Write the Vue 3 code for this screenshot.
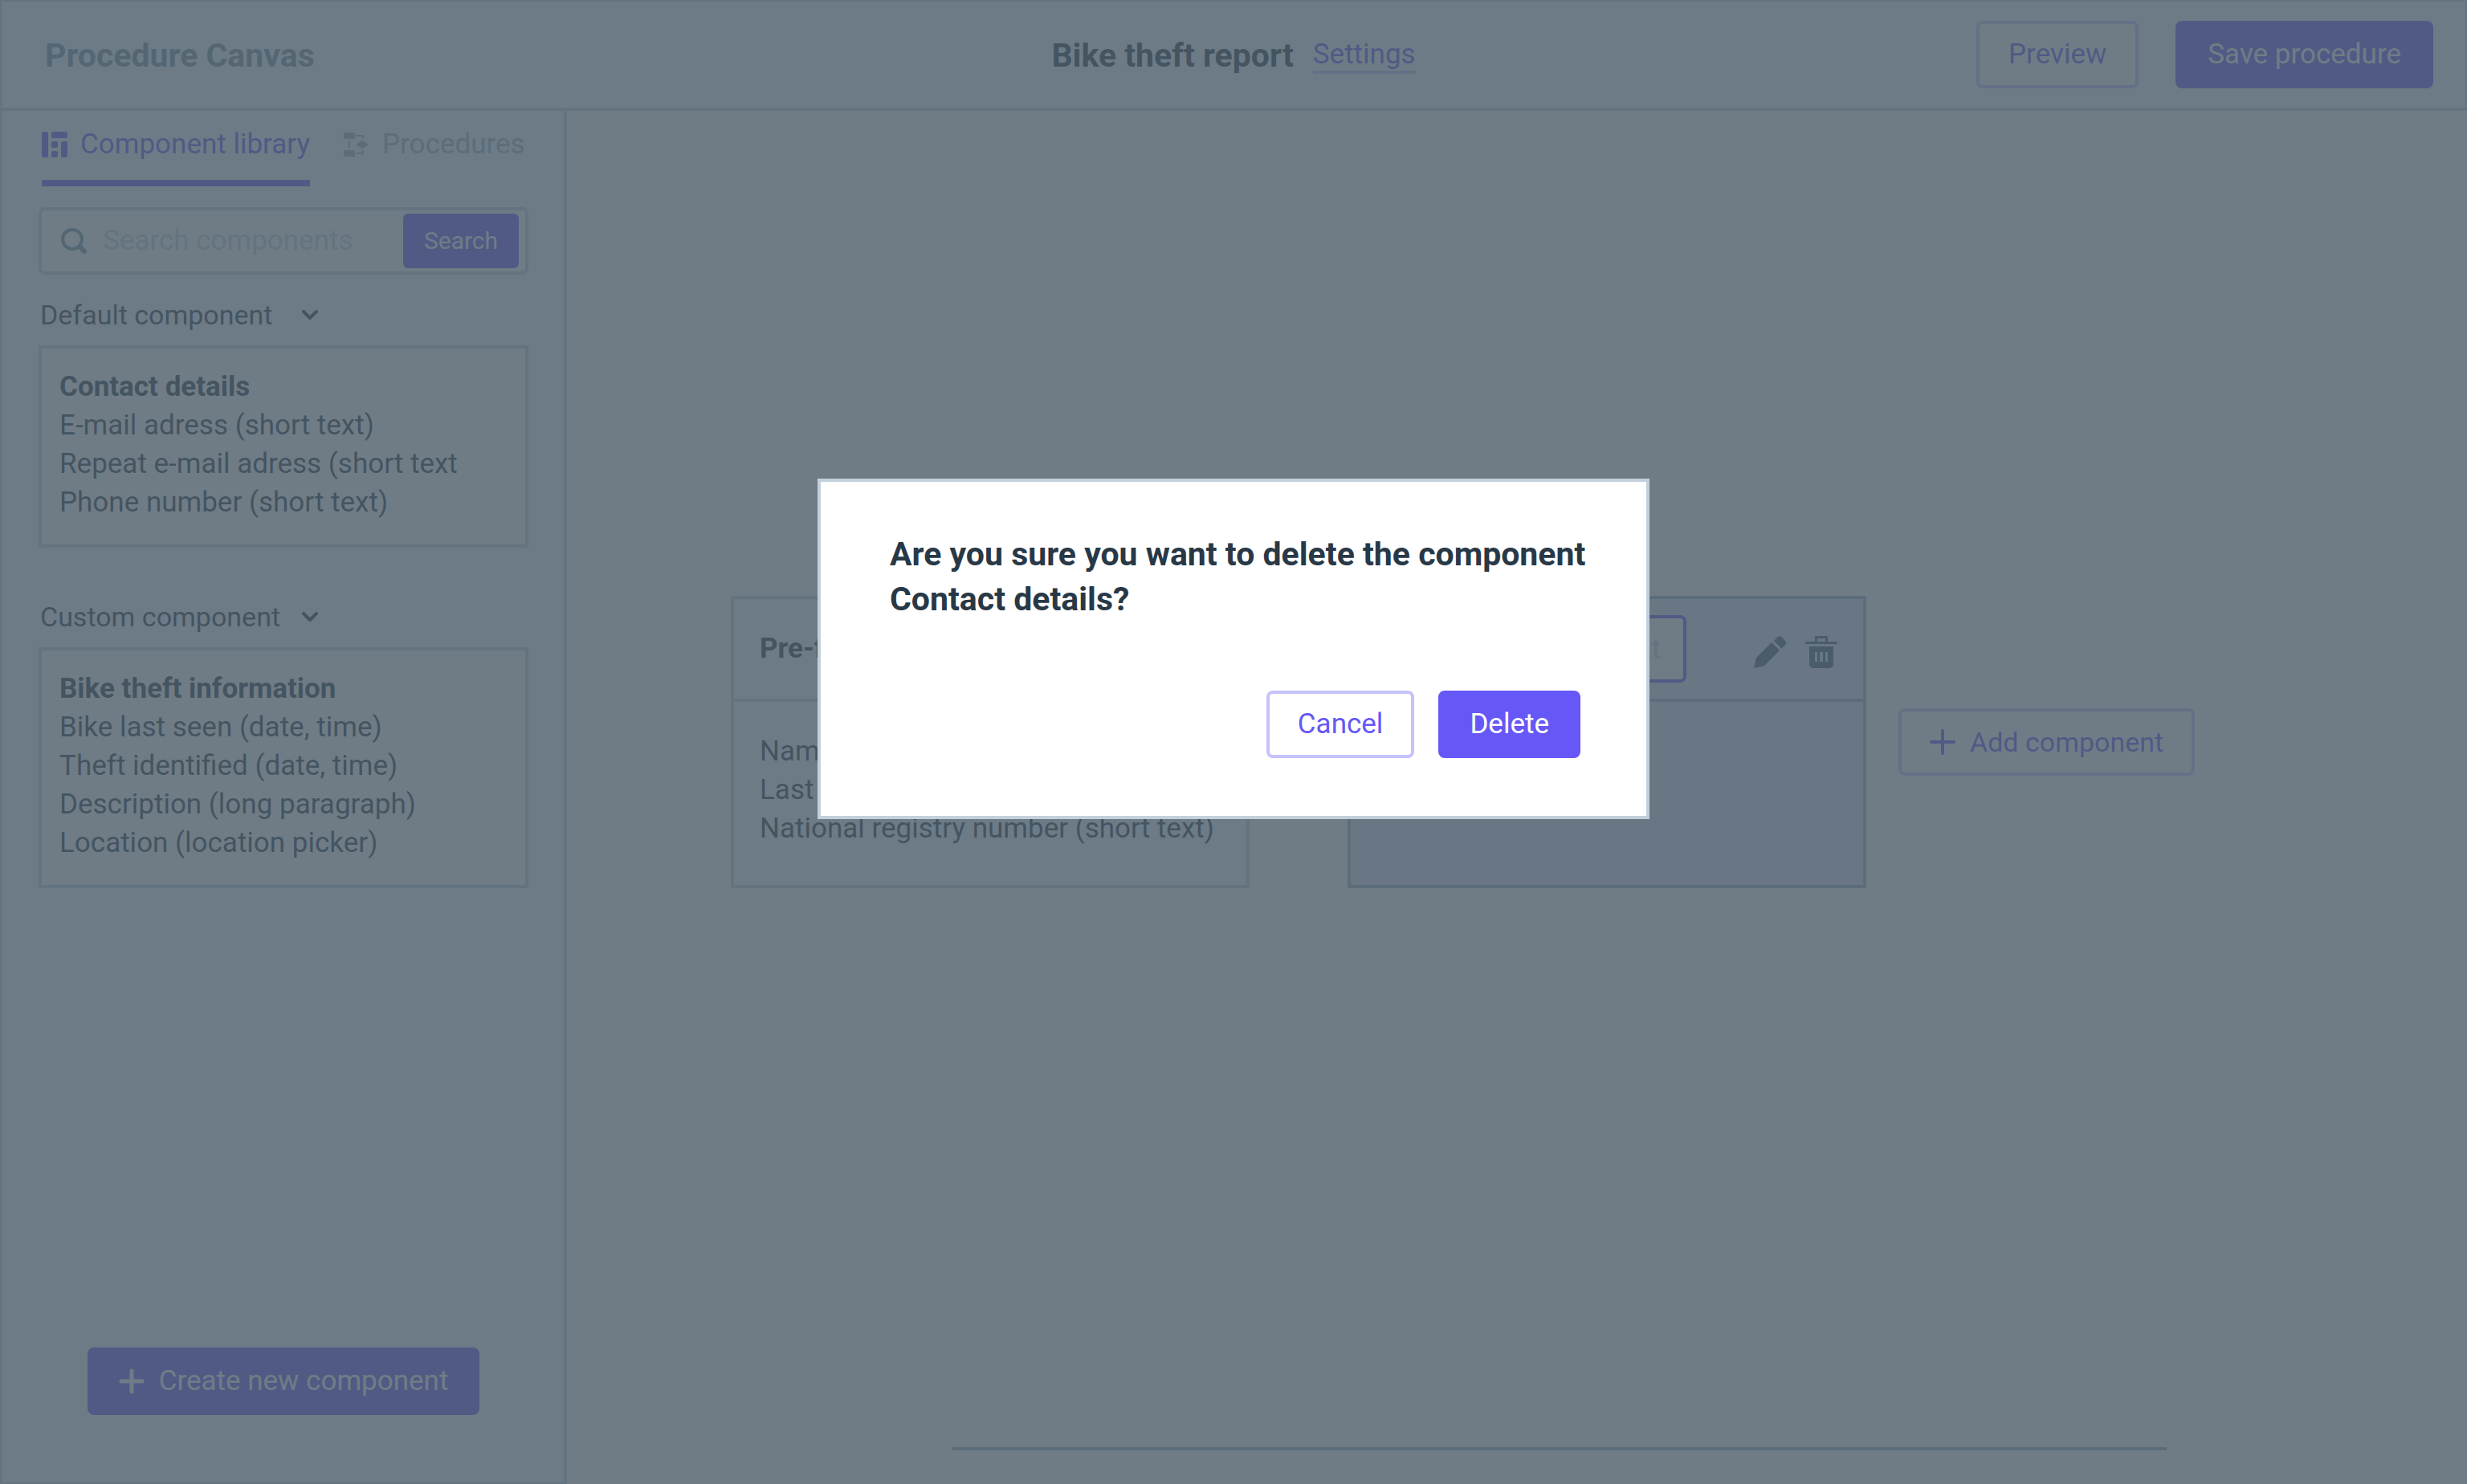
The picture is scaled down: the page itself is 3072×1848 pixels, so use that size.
<script setup>
import { ref } from 'vue'

const search = ref('')
const componentName = ref('')

const libraries = [
  {
    label: 'Default component',
    title: 'Contact details',
    fields: [
      'E-mail adress (short text)',
      'Repeat e-mail adress (short text',
      'Phone number (short text)',
    ],
  },
  {
    label: 'Custom component',
    title: 'Bike theft information',
    fields: [
      'Bike last seen (date, time)',
      'Theft identified (date, time)',
      'Description (long paragraph)',
      'Location (location picker)',
    ],
  },
]

const prefilled = [
  'Name (short text)',
  'Last name (short text)',
  'National registry number (short text)',
]
</script>

<template>
  <div class="app">
    <header class="topbar">
      <div class="brand">Procedure Canvas</div>
      <div class="document">
        <h1>Bike theft report</h1>
        <a href="#settings">Settings</a>
      </div>
      <div class="topbar-actions">
        <button type="button" class="btn outline">Preview</button>
        <button type="button" class="btn solid">Save procedure</button>
      </div>
    </header>

    <div class="workspace">
      <aside class="sidebar">
        <nav class="tabs">
          <a href="#library" class="tab active">
            <svg width="32" height="32" viewBox="0 0 32 32" fill="currentColor" aria-hidden="true">
              <rect x="0" y="0" width="8" height="32" rx="2" />
              <rect x="12" y="0" width="20" height="8" rx="2" />
              <rect x="12" y="12" width="8" height="8" rx="2" />
              <rect x="12" y="24" width="8" height="8" rx="2" />
              <rect x="24" y="12" width="8" height="20" rx="2" />
            </svg>
            <span>Component library</span>
          </a>
          <a href="#procedures" class="tab">
            <svg width="32" height="32" viewBox="0 0 32 32" fill="currentColor" aria-hidden="true">
              <rect x="0" y="1" width="14" height="8" rx="1" />
              <rect x="0" y="23" width="14" height="8" rx="1" />
              <rect x="6" y="11" width="2" height="10" />
              <path d="M15 4h10v5h-2V6h-8zM15 28h10v-5h-2v3h-8z" />
              <path d="M15 16l8-5.500 8 5.500-8 5.500z" />
            </svg>
            <span>Procedures</span>
          </a>
        </nav>

        <form class="search" @submit.prevent>
          <svg width="32" height="32" viewBox="0 0 32 32" fill="none" stroke="currentColor" stroke-linecap="round" aria-hidden="true">
            <circle cx="14" cy="14" r="12" stroke-width="4" />
            <path d="M24 24l5 5" stroke-width="6" />
          </svg>
          <input v-model="search" type="text" aria-label="Search components" placeholder="Search components" />
          <button type="submit" class="btn solid small">Search</button>
        </form>

        <section v-for="group in libraries" :key="group.label" class="library">
          <button type="button" class="library-toggle">
            <span>{{ group.label }}</span>
            <svg width="20" height="12" viewBox="0 0 20 12" fill="none" stroke="currentColor" stroke-width="4" stroke-linecap="round" stroke-linejoin="round" aria-hidden="true">
              <path d="M2 2l8 8 8-8" />
            </svg>
          </button>
          <article class="library-card">
            <h2>{{ group.title }}</h2>
            <p v-for="field in group.fields" :key="field">{{ field }}</p>
          </article>
        </section>

        <button type="button" class="btn solid create">
          <svg width="32" height="32" viewBox="0 0 32 32" fill="none" stroke="currentColor" stroke-width="5" stroke-linecap="round" aria-hidden="true">
            <path d="M16 3v26M3 16h26" />
          </svg>
          <span>Create new component</span>
        </button>
      </aside>

      <main class="canvas">
        <div class="flow">
          <section class="card">
            <header class="card-head">
              <h2>Pre-filled</h2>
            </header>
            <div class="card-body">
              <p v-for="field in prefilled" :key="field">{{ field }}</p>
            </div>
          </section>

          <section class="card selected">
            <header class="card-head">
              <input v-model="componentName" type="text" aria-label="Component name" placeholder="Name component" />
              <div class="card-tools">
                <button type="button" class="icon-btn" aria-label="Edit">
                  <svg width="40" height="40" viewBox="0 0 40 40" fill="currentColor" aria-hidden="true">
                    <path d="M22 8l10 10-19 19L0 40l3-13z" />
                    <path d="M25 6l4.500-4.800a4 4 0 0 1 5 0l4.500 5a4 4 0 0 1 0 5L34.500 15.500z" />
                  </svg>
                </button>
                <button type="button" class="icon-btn" aria-label="Delete component">
                  <svg width="40" height="40" viewBox="0 0 40 40" fill="currentColor" aria-hidden="true">
                    <path fill-rule="evenodd" d="M13 0h14a1 1 0 0 1 1 1v6h10.500a1.500 1.500 0 0 1 0 3h-37a1.500 1.500 0 0 1 0-3H12V1a1 1 0 0 1 1-1zM15 3v4h10V3z" />
                    <path fill-rule="evenodd" d="M5 13h30v22a5 5 0 0 1-5 5H10a5 5 0 0 1-5-5zM12 20v12h3V20zM18 20v12h4V20zM25 20v12h3V20z" />
                  </svg>
                </button>
              </div>
            </header>
            <div class="card-body"></div>
          </section>

          <button type="button" class="btn outline add">
            <svg width="32" height="32" viewBox="0 0 32 32" fill="none" stroke="currentColor" stroke-width="4" stroke-linecap="round" aria-hidden="true">
              <path d="M16 2v28M2 16h28" />
            </svg>
            <span>Add component</span>
          </button>
        </div>
        <div class="track"></div>
      </main>
    </div>

    <div class="backdrop">
      <div class="dialog" role="dialog" aria-modal="true" aria-labelledby="dialog-title">
        <h2 id="dialog-title">Are you sure you want to delete the component<br />Contact details?</h2>
        <div class="dialog-actions">
          <button type="button" class="btn outline">Cancel</button>
          <button type="button" class="btn solid">Delete</button>
        </div>
      </div>
    </div>
  </div>
</template>

<style>
body {
  margin: 0;
}
</style>

<style scoped>
.app {
  --ink: #283846;
  --muted: #78919f;
  --faint: #9bb4c3;
  --line: #c3d0dc;
  --tint: #f5f8ff;
  --accent: #6658f6;
  --accent-soft: #c6c2fb;
  display: flex;
  flex-direction: column;
  min-height: 100vh;
  background: #fff;
  color: var(--ink);
  font-family: Roboto, "Liberation Sans", sans-serif;
  font-size: 35px;
  font-weight: 400;
  line-height: 48px;
}

.app *,
.app *::before {
  box-sizing: border-box;
}

h1,
h2,
p {
  margin: 0;
}

h2 {
  font-size: 35px;
  line-height: 48px;
  font-weight: 700;
}

a {
  color: inherit;
  text-decoration: none;
}

svg {
  display: block;
  flex: none;
}

button,
input {
  font: inherit;
  color: inherit;
}

/* Buttons */
.btn {
  display: flex;
  align-items: center;
  justify-content: center;
  height: 84px;
  padding: 0 35px;
  border: 4px solid var(--accent);
  border-radius: 8px;
  white-space: nowrap;
}

.btn.solid {
  background: var(--accent);
  color: #fff;
}

.btn.outline {
  background: #fff;
  border-color: var(--accent-soft);
  color: var(--accent);
}

.btn.small {
  width: 144px;
  height: 68px;
  padding: 0;
  border-radius: 6px;
  font-size: 30px;
}

/* Top bar */
.topbar {
  display: grid;
  grid-template-columns: 1fr auto 1fr;
  align-items: center;
  height: 138px;
  padding: 0 40px;
  border: 2px solid var(--line);
  border-bottom-width: 4px;
  background: var(--tint);
}

.brand,
h1 {
  padding-top: 2px;
  font-size: 41px;
  line-height: 56px;
  font-weight: 700;
}

.brand {
  padding-left: 14px;
  color: var(--muted);
}

.document {
  display: flex;
  align-items: center;
  gap: 24px;
}

.document a {
  box-shadow: inset 0 -4px var(--accent-soft);
  color: var(--accent);
}

.topbar-actions {
  display: flex;
  justify-content: flex-end;
  gap: 46px;
}

.topbar-actions .btn {
  padding: 0 36px;
}

/* Sidebar */
.workspace {
  display: flex;
  flex: 1;
}

.sidebar {
  display: flex;
  flex-direction: column;
  flex: none;
  width: 706px;
  padding: 18px 44px 84px 46px;
  border: solid var(--line);
  border-width: 0 4px 2px 2px;
  background: var(--tint);
}

.tabs {
  display: flex;
  gap: 42px;
  padding-left: 4px;
}

.tab {
  display: flex;
  align-items: flex-start;
  gap: 16px;
  height: 76px;
  color: var(--faint);
  white-space: nowrap;
}

.tab svg {
  margin-top: 8px;
}

.tab.active {
  border-bottom: 8px solid var(--accent);
  color: var(--accent);
}

.search {
  display: flex;
  align-items: center;
  gap: 20px;
  height: 84px;
  margin: 26px 0;
  padding: 0 8px 0 24px;
  border: 4px solid var(--line);
  border-radius: 8px;
  background: #fff;
  color: var(--muted);
}

.search input {
  flex: 1;
  min-width: 0;
  padding: 0;
  border: 0;
  background: transparent;
  color: var(--ink);
}

input::placeholder {
  color: var(--line);
  opacity: 1;
}

.library {
  display: flex;
  flex-direction: column;
  align-items: stretch;
  gap: 14px;
  margin-bottom: 62px;
}

.library-toggle {
  display: flex;
  align-items: center;
  padding: 0 0 0 2px;
  border: 0;
  background: none;
  font-size: 34px;
  text-align: left;
}

.library-toggle span {
  min-width: 326px;
}

.library-card {
  padding: 24px 22px 28px;
  border: 4px solid var(--line);
  background: #fff;
  white-space: nowrap;
}

.create {
  align-self: center;
  gap: 18px;
  margin-top: auto;
}

/* Canvas */
.canvas {
  display: flex;
  flex-direction: column;
  flex: 1;
  min-width: 0;
  padding: 604px 0 42px 204px;
}

.flow {
  display: flex;
  align-items: center;
}

.card {
  flex: none;
  width: 646px;
  border: 4px solid var(--line);
  background: var(--tint);
}

.card-head {
  display: flex;
  align-items: center;
  justify-content: space-between;
  height: 128px;
  padding: 0 32px;
  border-bottom: 4px solid var(--line);
}

.card-body {
  height: 228px;
  padding: 38px 32px 46px;
  white-space: nowrap;
}

.card.selected {
  margin-left: 122px;
  border-color: var(--faint);
  background: #d9e7ee;
}

.card.selected .card-head {
  border-color: var(--faint);
}

.card-head input {
  width: 386px;
  height: 84px;
  padding: 0 28px;
  border: 4px solid var(--accent);
  border-radius: 8px;
  background: #fff;
  text-align: right;
}

.card-tools {
  display: flex;
  gap: 24px;
  padding-top: 8px;
}

.icon-btn {
  padding: 0;
  border: 0;
  background: none;
  color: #465f6e;
}

.add {
  gap: 18px;
  margin-left: 40px;
  font-size: 34px;
}

.track {
  width: 70%;
  height: 4px;
  margin: auto 374px 0 auto;
  background: var(--faint);
}

/* Dialog */
.backdrop {
  position: fixed;
  inset: 0;
  display: flex;
  align-items: flex-start;
  justify-content: center;
  padding-top: 596px;
  background: rgb(75 91 104 / 80%);
}

.dialog {
  width: 1036px;
  padding: 62px 34px 72px 86px;
  border: 4px solid #c3d0dc;
  background: #fff;
}

.dialog h2 {
  font-size: 41px;
  line-height: 56px;
  white-space: nowrap;
}

.dialog-actions {
  display: flex;
  justify-content: flex-end;
  gap: 30px;
  margin-top: 86px;
  padding-right: 48px;
}
</style>
